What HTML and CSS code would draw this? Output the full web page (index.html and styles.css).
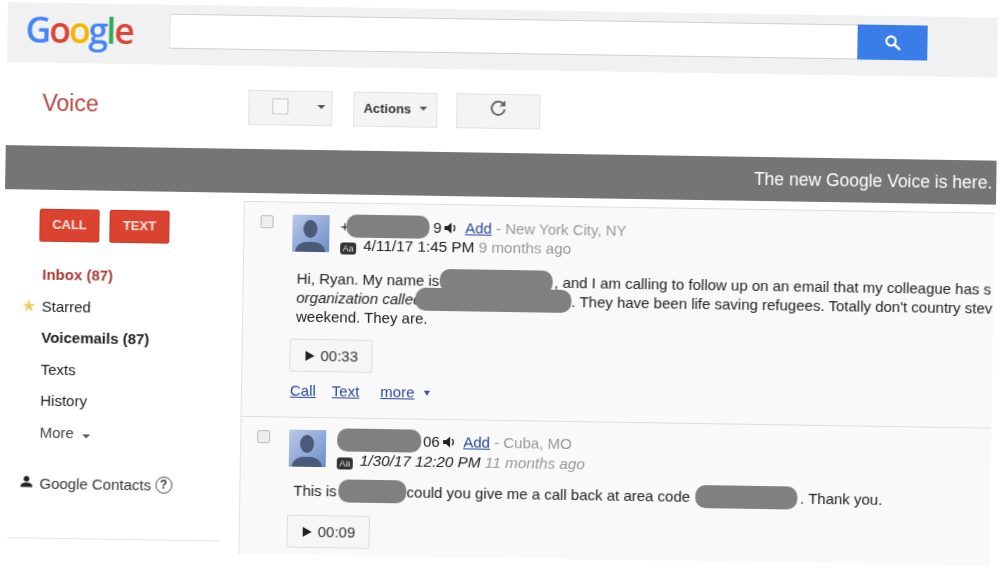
FILE: index.html
```html
<!DOCTYPE html>
<html lang="en">
<head>
  <meta charset="UTF-8">
  <meta name="viewport" content="width=device-width, initial-scale=1.0">
  <title>Google Voice</title>
  <link rel="stylesheet" href="styles.css">
</head>
<body>
  <div class="page">
    <header class="top-bar">
      <div class="logo"><span class="blue">G</span><span class="red">o</span><span class="yellow">o</span><span class="blue">g</span><span class="green">l</span><span class="red">e</span></div>
      <div class="search">
        <div class="search-input"></div>
        <button class="search-btn" aria-label="Search">
          <svg width="18" height="18" viewBox="0 0 18 18"><circle cx="7.5" cy="7" r="4.6" fill="none" stroke="#fff" stroke-width="2.2"/><path d="M11 10.5l5 4.6" stroke="#fff" stroke-width="2.4" stroke-linecap="round"/></svg>
        </button>
      </div>
    </header>

    <div class="toolbar">
      <div class="product">Voice</div>
      <div class="tool-btn select-btn"><span class="fake-check"></span><span class="caret"></span></div>
      <div class="tool-btn actions-btn">Actions<span class="caret"></span></div>
      <div class="tool-btn refresh-btn">
        <svg width="20" height="20" viewBox="0 0 20 20"><path d="M15.6 7A6.6 6.6 0 1 0 16.4 11.5" fill="none" stroke="#666" stroke-width="1.9"/><path d="M17 2.5v6h-6z" fill="#666"/></svg>
      </div>
    </div>

    <div class="banner">The new Google Voice is here.</div>

    <div class="main">
      <!-- Ліва колонка -->
      <aside class="sidebar">
        <div class="compose">
          <button class="red-btn">CALL</button>
          <button class="red-btn">TEXT</button>
        </div>
        <ul class="nav">
          <li class="nav-inbox">Inbox (87)</li>
          <li class="nav-starred"><span class="star">★</span>Starred</li>
          <li class="nav-bold">Voicemails (87)</li>
          <li>Texts</li>
          <li>History</li>
          <li class="nav-more">More<span class="caret"></span></li>
        </ul>
        <div class="contacts">
          <svg class="person" width="12" height="12" viewBox="0 0 12 12"><circle cx="6" cy="3.2" r="2.8" fill="#222"/><path d="M0 11.5c0-3.4 3-4.5 6-4.5s6 1.100 6 4.500z" fill="#222"/></svg>
          Google Contacts
          <span class="help">?</span>
        </div>
        <div class="side-line"></div>
      </aside>

      <!-- Список повідомлень -->
      <section class="list">
        <article class="msg">
          <div class="msg-head">
            <span class="check"></span>
            <svg class="avatar" viewBox="0 0 37 37"><defs><linearGradient id="av1" x1="0" y1="0" x2="1" y2="1"><stop offset="0" stop-color="#b9c8e8"/><stop offset="1" stop-color="#6f8fc8"/></linearGradient></defs><rect width="37" height="37" fill="url(#av1)"/><ellipse cx="18" cy="14" rx="7" ry="9" fill="#4a5a78"/><path d="M3 37c1-9 8-10 15-10s14 1 15 10z" fill="#4a5a78"/></svg>
            <div class="lines">
              <div class="line">+<span class="redact redact-a"></span>9
                <svg class="speaker" width="13" height="12" viewBox="0 0 13 12"><path d="M0 4h3l4-3.500v11L3 8H0z" fill="#222"/><path d="M9 3c1.500 1.600 1.500 4.400 0 6" fill="none" stroke="#222" stroke-width="1.500"/></svg>
                <a class="link add">Add</a> <span class="gray">- New York City, NY</span>
              </div>
              <div class="line date-line"><span class="note">Aa</span>4/11/17 1:45 PM <span class="gray">9 months ago</span></div>
            </div>
          </div>
          <div class="msg-text">
            <div class="text-line">Hi, Ryan. My name is<span class="redact redact-b"></span>, and I am calling to follow up on an email that my colleague has s</div>
            <div class="text-line"><i>organization called</i><span class="redact redact-c"></span>. They have been life saving refugees. Totally don't country stev</div>
            <div class="text-line">weekend. They are.</div>
          </div>
          <button class="play"><span class="play-icon"></span>00:33</button>
          <div class="msg-links"><a class="link">Call</a><a class="link">Text</a><a class="link link-more">more</a><span class="blue-caret"></span></div>
        </article>

        <article class="msg msg-second">
          <div class="msg-head">
            <span class="check"></span>
            <svg class="avatar" viewBox="0 0 37 37"><rect width="37" height="37" fill="url(#av1)"/><ellipse cx="18" cy="14" rx="7" ry="9" fill="#4a5a78"/><path d="M3 37c1-9 8-10 15-10s14 1 15 10z" fill="#4a5a78"/></svg>
            <div class="lines">
              <div class="line"><span class="redact redact-d"></span>06
                <svg class="speaker" width="13" height="12" viewBox="0 0 13 12"><path d="M0 4h3l4-3.500v11L3 8H0z" fill="#222"/><path d="M9 3c1.500 1.600 1.500 4.400 0 6" fill="none" stroke="#222" stroke-width="1.500"/></svg>
                <a class="link add">Add</a> <span class="gray">- Cuba, MO</span>
              </div>
              <div class="line date-line"><span class="note">Aa</span><i>1/30/17 12:20 PM <span class="gray">11 months ago</span></i></div>
            </div>
          </div>
          <div class="msg-text">
            <div class="text-line">This is<span class="redact redact-e"></span>could you give me a call back at area code<span class="redact redact-f"></span>. Thank you.</div>
          </div>
          <button class="play"><span class="play-icon"></span>00:09</button>
        </article>
      </section>
    </div>
  </div>
</body>
</html>
```

FILE: styles.css
```css
html, body {
  margin: 0;
  height: 100%;
  overflow: hidden;
  background: #fff;
}

body {
  font-family: "Liberation Sans", Arial, sans-serif;
  font-size: 15px;
  color: #222;
}

/* the whole shot is tilted a little */
.page {
  width: 1010px;
  padding-left: 8px;
  box-sizing: border-box;
  transform: rotate(0.9deg);
  transform-origin: 0 0;
  filter: blur(0.4px);
}

.top-bar {
  display: flex;
  margin-top: 2px;
  width: 990px;
  height: 60px;
  background: #f1f1f1;
}

.logo {
  width: 162px;
  padding-left: 18px;
  box-sizing: border-box;
  font-family: "Open Sans", sans-serif;
  font-size: 35.500px;
  font-weight: 600;
  line-height: 53px;
  letter-spacing: -2px;
}

.blue { color: #4285f4; }
.red { color: #dc4437; }
.yellow { color: #f4b400; }
.green { color: #34a853; }

.search {
  display: flex;
  margin-top: 9px;
  height: 35px;
}

.search-input {
  width: 688px;
  background: #fff;
  border: 1px solid #d0d0d0;
  border-left-color: #e8e8e8;
  border-right: none;
  box-sizing: border-box;
}

.search-btn {
  width: 70px;
  border: none;
  padding: 0;
  background: #3b7de8;
  display: flex;
  align-items: center;
  justify-content: center;
}

.toolbar {
  display: flex;
  align-items: flex-start;
  height: 83px;
  padding-top: 24px;
  box-sizing: border-box;
}

.product {
  width: 242px;
  padding-left: 36px;
  box-sizing: border-box;
  font-size: 23px;
  line-height: 32px;
  color: #b5423c;
}

.tool-btn {
  display: flex;
  align-items: center;
  justify-content: center;
  width: 84px;
  height: 35px;
  box-sizing: border-box;
  padding-bottom: 3px;
  background: #f4f4f4;
  border: 1px solid #e2e2e2;
  font-size: 13px;
  font-weight: bold;
  color: #333;
}

.select-btn {
  justify-content: flex-start;
  margin-right: 21px;
  padding-left: 23px;
}

.actions-btn { margin-right: 19px; }
.refresh-btn { padding-bottom: 7px; }

.fake-check {
  width: 14px;
  height: 14px;
  border: 1px solid #c8c8c8;
  background: #f8f8f8;
  margin-right: 21px;
}

.caret {
  display: inline-block;
  margin-left: 8px;
  border: 4px solid transparent;
  border-top-color: #555;
  border-bottom: none;
}

.banner {
  width: 991px;
  height: 44px;
  background: #757575;
  color: #fff;
  font-size: 17.500px;
  line-height: 45px;
  text-align: right;
  padding-right: 4px;
  box-sizing: border-box;
}

.main {
  display: flex;
  align-items: flex-start;
}

.sidebar {
  width: 239px;
  flex-shrink: 0;
}

.compose {
  display: flex;
  gap: 10px;
  margin: 19px 0 17px 35px;
}

.red-btn {
  width: 60px;
  height: 33px;
  padding: 0 0 3px;
  border: 1px solid #c9392a;
  border-radius: 2px;
  background: #d9432f;
  color: #fbe6e2;
  font-family: inherit;
  font-size: 13px;
  font-weight: bold;
}

.nav {
  list-style: none;
  margin: 0;
  padding: 0 0 0 38.500px;
  position: relative;
}

.nav li {
  height: 31.500px;
  line-height: 31.500px;
  white-space: nowrap;
}

.nav-inbox {
  font-weight: bold;
  color: #a83a34;
}

.nav-bold { font-weight: bold; }
.nav-more { color: #444; }

.star {
  position: absolute;
  left: 18px;
  color: #e8cf6a;
  font-size: 17px;
}

.contacts {
  display: flex;
  align-items: center;
  height: 31.500px;
  margin-top: 20px;
  padding-left: 20px;
  color: #333;
  white-space: nowrap;
}

.person { margin-right: 7px; margin-top: -4px; }

.help {
  width: 15px;
  height: 15px;
  margin-left: 4px;
  border: 1.500px solid #444;
  border-radius: 50%;
  font-size: 12px;
  font-weight: bold;
  line-height: 15px;
  text-align: center;
}

.side-line {
  margin: 38px 20px 0 8px;
  height: 1px;
  background: #e4e4e4;
}

.list {
  width: 751px;
  margin-top: 8px;
  background: #f9f9f9;
  border-top: 1px solid #ddd;
  border-left: 1px solid #e2e2e2;
  box-sizing: border-box;
  overflow: hidden;
}

.msg {
  height: 215px;
  padding: 12px 0 0 16px;
  box-sizing: border-box;
  border-bottom: 1px solid #dcdcdc;
}

.msg-second {
  height: 137px;
  border-bottom: none;
}

.msg-head { display: flex; }

.check {
  width: 13px;
  height: 13px;
  margin: 1px 19px 0 0;
  border: 1px solid #bbb;
  border-radius: 2px;
  background: #eee;
  box-sizing: border-box;
}

.avatar {
  width: 37px;
  height: 37px;
  margin-right: 11px;
}

.lines { margin-top: 1px; }

.line {
  line-height: 19px;
  white-space: nowrap;
}

.date-line {
  font-size: 15.300px;
}

.msg-second .lines { margin-top: -1px; }
.msg-second .line { line-height: 21px; }
.msg-second .date-line { margin-top: -1px; }

.gray { color: #999; }

.note {
  display: inline-block;
  width: 16px;
  height: 12px;
  margin-right: 7px;
  border-radius: 3px;
  background: #333;
  color: #ddd;
  font-size: 9px;
  line-height: 12px;
  text-align: center;
  vertical-align: -1px;
}

.speaker { margin: 0 4px 0 -1px; vertical-align: -1px; }

.link {
  color: #2b4a9b;
  text-decoration: underline;
}

.redact {
  display: inline-block;
  position: relative;
  height: 23px;
  margin: -8px 0;
  border-radius: 10px;
  background: #808080;
  vertical-align: 2px;
}

.redact-a { width: 83px; margin-left: -3px; margin-right: 4px; }
.redact-b { width: 113px; margin-right: 2px; }
.redact-c { width: 156px; margin-left: -6px; }
.redact-d { width: 84px; margin-right: 2px; }
.redact-e { width: 68px; margin-left: 2px; }
.redact-f { width: 102px; margin-left: 5px; margin-right: 3px; }

.msg-text {
  margin: 15px 0 0 37px;
}

.msg-second .msg-text { margin-top: 11px; }

.text-line {
  line-height: 19px;
  white-space: nowrap;
}

.play {
  display: flex;
  align-items: center;
  width: 83px;
  height: 33px;
  margin: 13px 0 0 31px;
  padding: 0 0 0 15px;
  background: #f6f6f6;
  border: 1px solid #ddd;
  border-radius: 2px;
  font-family: inherit;
  font-size: 15px;
  color: #333;
}

.msg-second .play { margin-top: 15px; }

.play-icon {
  margin-right: 6px;
  border-left: 9px solid #222;
  border-top: 5px solid transparent;
  border-bottom: 5px solid transparent;
}

.msg-links {
  display: flex;
  align-items: center;
  margin: 9px 0 0 32px;
  line-height: 20px;
}

.msg-links .link { margin-right: 16px; }
.msg-links .link-more { margin: 0 9px 0 5px; }

.blue-caret {
  border: 3.500px solid transparent;
  border-top: 5px solid #2b4a9b;
  border-bottom: none;
}
```
